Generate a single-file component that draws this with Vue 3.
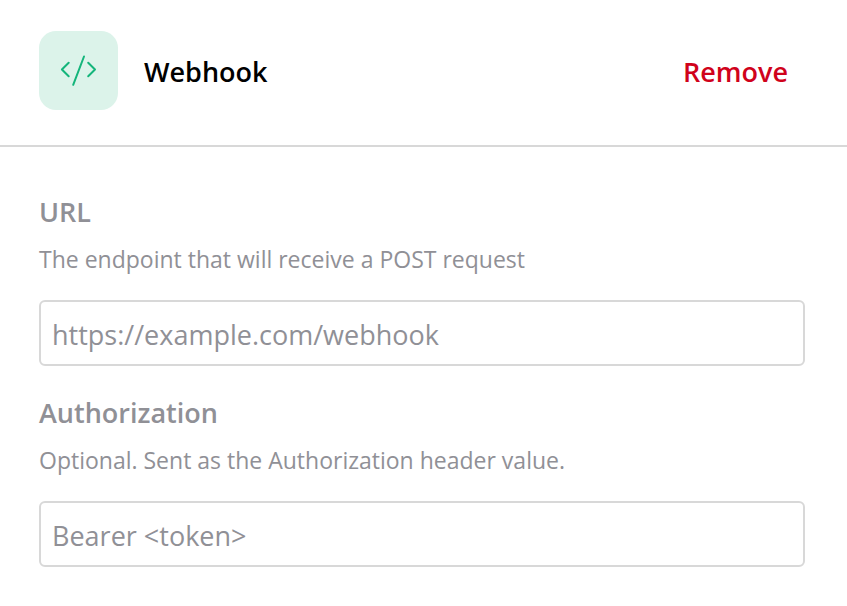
<script setup>
import { ref } from 'vue'

const url = ref('')
const authorization = ref('')
</script>

<template>
  <main class="webhook">
    <header class="header">
      <span class="badge">
        <svg class="code-icon" viewBox="0 0 41 37" fill="none" aria-hidden="true">
          <path d="M10.700 10.700 3.900 17.500l6.800 6.800M30.200 10.700l6.800 6.800-6.800 6.800M26 4.500 15.200 32.800" />
        </svg>
      </span>
      <h1 class="title">Webhook</h1>
      <button class="remove" type="button">Remove</button>
    </header>
    <form class="fields" @submit.prevent>
      <div class="field">
        <label class="label" for="url">URL</label>
        <p id="url-hint" class="hint">The endpoint that will receive a POST request</p>
        <input id="url" v-model="url" class="input" type="url" aria-describedby="url-hint" placeholder="https://example.com/webhook" />
      </div>
      <div class="field">
        <label class="label" for="authorization">Authorization</label>
        <p id="authorization-hint" class="hint">Optional. Sent as the Authorization header value.</p>
        <input id="authorization" v-model="authorization" class="input" type="text" aria-describedby="authorization-hint" placeholder="Bearer &lt;token&gt;" />
      </div>
    </form>
  </main>
</template>

<style>
body {
  margin: 0;
  background: #fff;
}
</style>

<style scoped>
.webhook {
  font-family: "Segoe UI", "Open Sans", "Noto Sans", sans-serif;
  color: #909096;
}

.header {
  display: flex;
  align-items: center;
  padding: 31px 59px 35px 39px;
  border-bottom: 2px solid #d8d8d8;
}

.badge {
  display: grid;
  place-items: center;
  width: 79px;
  height: 79px;
  border-radius: 17px;
  background: #dcf3ea;
}

.code-icon {
  width: 41px;
  height: 37px;
  stroke: #14b57b;
  stroke-width: 2;
  stroke-linecap: round;
  stroke-linejoin: round;
}

.title,
.remove {
  padding: 2px 0 0;
  font-size: 27px;
  font-weight: 600;
  line-height: 36px;
}

.title {
  margin: 0 auto 0 26px;
  color: #000;
}

.remove {
  border: 0;
  background: none;
  color: #d0021b;
  font-family: inherit;
  cursor: pointer;
}

.fields {
  display: grid;
  gap: 29px;
  padding: 47px 42px 39px 39px;
}

.label {
  display: block;
  font-size: 27px;
  font-weight: 600;
  line-height: 36px;
}

.hint {
  margin: 13px 0 25px;
  font-size: 23px;
  line-height: 32px;
}

.input {
  display: block;
  box-sizing: border-box;
  width: 100%;
  height: 66px;
  padding: 2px 11px 0;
  border: 2px solid #d8d8d8;
  border-radius: 6px;
  background: #fff;
  color: #222;
  font: inherit;
  font-size: 27px;
}

.input::placeholder {
  color: #909096;
  opacity: 1;
}
</style>
